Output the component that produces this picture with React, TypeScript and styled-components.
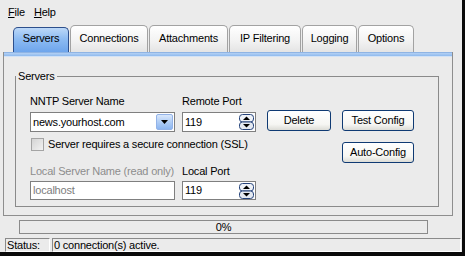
import React from 'react';
import styled, { createGlobalStyle } from 'styled-components';

const GlobalStyle = createGlobalStyle`
  html, body { margin: 0; padding: 0; background: #ebebeb; }
  body {
    font-family: "Liberation Sans", Arial, sans-serif;
    font-size: 11px;
    letter-spacing: -0.2px;
    color: #000;
  }
  * { box-sizing: border-box; }
`;

const Window = styled.div`
  width: 465px;
  height: 256px;
  display: flex;
  flex-direction: column;
  padding-left: 3px;
  background: #ebebeb;
  border-right: 3px solid #0a0a0a;
  border-bottom: 4px solid #0a0a0a;
  line-height: 13px;
`;

const MenuBar = styled.div`
  height: 22px;
  display: flex;
  gap: 9px;
  padding: 6px 0 0 5px;
`;

const MenuItem = styled.span`
  white-space: nowrap;
`;

const Mnemonic = styled.span`
  text-decoration: underline;
`;

const TabStrip = styled.div`
  height: 30px;
  display: flex;
  align-items: flex-end;
  gap: 1px;
  padding-left: 10px;
`;

const Tab = styled.div<{ $active?: boolean; $w: number }>`
  width: ${p => p.$w}px;
  height: ${p => (p.$active ? 25 : 27)}px;
  padding-top: ${p => (p.$active ? 4 : 6)}px;
  text-align: center;
  white-space: nowrap;
  border: 1px solid ${p => (p.$active ? '#2d4f8c' : '#a2a2a2')};
  border-bottom: none;
  border-radius: 5px 5px 0 0;
  background: ${p =>
    p.$active
      ? 'linear-gradient(#bcd8f8, #8ebcf2 45%, #6ea5ec)'
      : 'linear-gradient(#ffffff, #f3f3f3 55%, #e4e4e4)'};
`;

const Panel = styled.div`
  width: 450px;
  height: 164px;
  display: flex;
  flex-direction: column;
  border: 1px solid #8e8e8e;
  border-top: none;
`;

const PanelBar = styled.div`
  height: 5px;
  border-top: 1px solid #8fb4e4;
  border-bottom: 1px solid #d2e2f6;
  background: linear-gradient(#b4d1f4, #8fbaee);
`;

const PanelBody = styled.div`
  padding: 13px 0 0 11px;
`;

const Group = styled.fieldset`
  width: 424px;
  height: 137px;
  margin: 0;
  padding: 0;
  min-inline-size: 0;
  border: 1px solid #8a8a8a;
`;

const GroupTitle = styled.legend`
  padding: 0 2px;
  line-height: 13px;
`;

const GroupBody = styled.div`
  display: flex;
  padding: 12px 0 0 14px;
`;

const FieldColumn = styled.div`
  width: 226px;
  display: flex;
  flex-direction: column;
`;

const FieldRow = styled.div<{ $top?: number }>`
  display: grid;
  grid-template-columns: 145px 74px;
  column-gap: 7px;
  margin-top: ${p => p.$top ?? 0}px;
`;

const Label = styled.span<{ $disabled?: boolean }>`
  white-space: nowrap;
  color: ${p => (p.$disabled ? '#8d8d8d' : '#000')};
`;

const Field = styled.div<{ $h: number }>`
  height: ${p => p.$h}px;
  display: flex;
  align-items: center;
  padding: 0 1px 0 2px;
  background: #fff;
  border: 1px solid #7f7f7f;
`;

const FieldText = styled.span<{ $muted?: boolean }>`
  flex: 1;
  white-space: nowrap;
  color: ${p => (p.$muted ? '#7d7d7d' : '#000')};
`;

const ComboArrow = styled.div`
  width: 17px;
  height: 16px;
  display: flex;
  align-items: center;
  justify-content: center;
  border: 1px solid #93b3e8;
  border-radius: 2px;
  background: linear-gradient(#dae8fc, #b0cdf5 50%, #8cb6f1);
`;

const CheckRow = styled.label`
  height: 14px;
  margin-top: 5px;
  display: flex;
  align-items: center;
  gap: 4px;
  padding-left: 1px;
  white-space: nowrap;
`;

const CheckBox = styled.span`
  width: 13px;
  height: 13px;
  border: 1px solid #a4a4a4;
  background: linear-gradient(135deg, #d4d4d4, #f2f2f2);
`;

const ButtonGrid = styled.div`
  display: grid;
  grid-template-columns: 64px 72px;
  column-gap: 11px;
  row-gap: 11px;
  margin: 15px 0 0 11px;
  align-self: flex-start;
`;

const Button = styled.button`
  height: 21px;
  padding: 0;
  font: inherit;
  letter-spacing: inherit;
  color: #000;
  white-space: nowrap;
  border: 1px solid #0f3a73;
  border-radius: 3px;
  background: linear-gradient(#ffffff, #f6f6f3 70%, #dcdcd6);
`;

const AutoButton = styled(Button)`
  grid-column: 2;
`;

const Progress = styled.div`
  width: 409px;
  height: 14px;
  margin: 4px 0 0 16px;
  display: flex;
  align-items: center;
  justify-content: center;
  line-height: 12px;
  border: 1px solid #8a8a8a;
`;

const StatusBar = styled.div`
  height: 14px;
  margin: 4px 0 0 2px;
  display: flex;
  gap: 2px;
`;

const StatusCell = styled.div<{ $w: number }>`
  width: ${p => p.$w}px;
  padding-left: 1px;
  line-height: 12px;
  white-space: nowrap;
  border-top: 1px solid #8a8a8a;
  border-left: 1px solid #8a8a8a;
  border-bottom: 1px solid #ffffff;
  border-right: 1px solid #ffffff;
`;

const DownArrow = () => (
  <svg width="9" height="6" viewBox="0 0 9 6">
    <polygon points="1,1 8,1 4.5,5" fill="#000" />
  </svg>
);

const SpinButtons = () => (
  <svg width="15" height="16" viewBox="0 0 15 16">
    <rect x="0.5" y="0.5" width="14" height="7.5" rx="3" fill="#eef2f8" stroke="#24427a" />
    <rect x="0.5" y="8" width="14" height="7.5" rx="3" fill="#e4e9f1" stroke="#24427a" />
    <polygon points="4,6 11,6 7.5,2.5" fill="#000" />
    <polygon points="4,10 11,10 7.5,13.5" fill="#000" />
  </svg>
);

const tabs = [
  { name: 'Servers', w: 56 },
  { name: 'Connections', w: 78 },
  { name: 'Attachments', w: 79 },
  { name: 'IP Filtering', w: 72 },
  { name: 'Logging', w: 55 },
  { name: 'Options', w: 56 },
];

export default function App() {
  return (
    <>
      <GlobalStyle />
      <Window>
        <MenuBar>
          <MenuItem><Mnemonic>F</Mnemonic>ile</MenuItem>
          <MenuItem><Mnemonic>H</Mnemonic>elp</MenuItem>
        </MenuBar>
        <TabStrip>
          {tabs.map((t, i) => (
            <Tab key={t.name} $w={t.w} $active={i === 0}>{t.name}</Tab>
          ))}
        </TabStrip>
        <Panel>
          <PanelBar />
          <PanelBody>
            <Group>
              <GroupTitle>Servers</GroupTitle>
              <GroupBody>
                <FieldColumn>
                  <FieldRow>
                    <Label>NNTP Server Name</Label>
                    <Label>Remote Port</Label>
                  </FieldRow>
                  <FieldRow $top={4}>
                    <Field $h={20}>
                      <FieldText>news.yourhost.com</FieldText>
                      <ComboArrow><DownArrow /></ComboArrow>
                    </Field>
                    <Field $h={20}>
                      <FieldText>119</FieldText>
                      <SpinButtons />
                    </Field>
                  </FieldRow>
                  <CheckRow>
                    <CheckBox />
                    Server requires a secure connection (SSL)
                  </CheckRow>
                  <FieldRow $top={14}>
                    <Label $disabled>Local Server Name (read only)</Label>
                    <Label>Local Port</Label>
                  </FieldRow>
                  <FieldRow $top={3}>
                    <Field $h={19}>
                      <FieldText $muted>localhost</FieldText>
                    </Field>
                    <Field $h={19}>
                      <FieldText>119</FieldText>
                      <SpinButtons />
                    </Field>
                  </FieldRow>
                </FieldColumn>
                <ButtonGrid>
                  <Button>Delete</Button>
                  <Button>Test Config</Button>
                  <AutoButton>Auto-Config</AutoButton>
                </ButtonGrid>
              </GroupBody>
            </Group>
          </PanelBody>
        </Panel>
        <Progress>0%</Progress>
        <StatusBar>
          <StatusCell $w={45}>Status:</StatusCell>
          <StatusCell $w={409}>0 connection(s) active.</StatusCell>
        </StatusBar>
      </Window>
    </>
  );
}
